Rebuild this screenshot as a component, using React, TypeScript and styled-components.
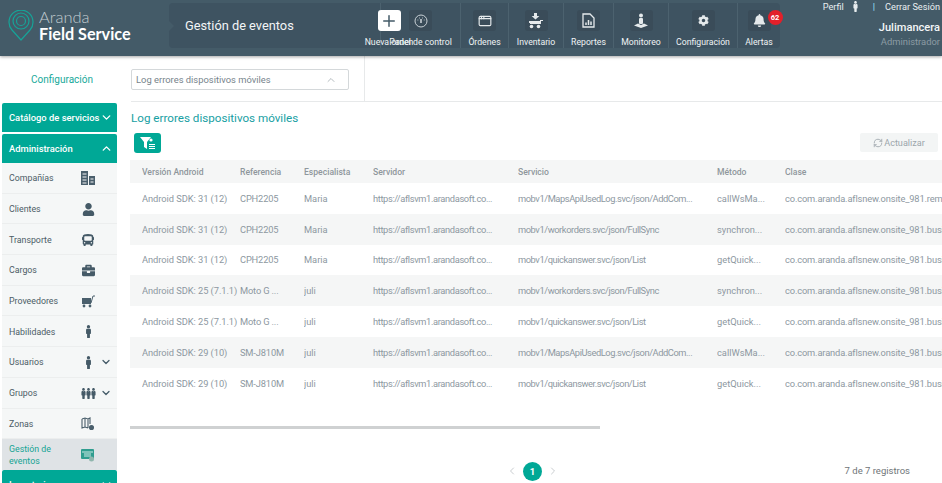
import React from "react";
import styled, { createGlobalStyle } from "styled-components";
import { FaUser, FaBus, FaBriefcase, FaMale, FaBell, FaCog } from "react-icons/fa";
import { Plus, AppWindow, RefreshCw, ChevronLeft, ChevronRight, ChevronDown, ChevronUp } from "lucide-react";

const Global = createGlobalStyle`
  html, body { margin: 0; padding: 0; background: #fff; overflow: hidden; }
  body { font-family: Roboto, "Noto Sans", sans-serif; width: 942px; height: 483px; }
  * { box-sizing: border-box; }
`;
const Page = styled.div`width: 942px; height: 483px; display: flex; flex-direction: column; overflow: hidden;`;
const Header = styled.header`
  height: 56px; flex: none; background: #445b68; display: flex; box-shadow: 0 1px 3px rgba(0,0,0,.35);
  position: relative; z-index: 2;
`;
const Logo = styled.div`width: 169px; flex: none; display: flex; align-items: flex-start; padding: 10px 0 0 8px; gap: 5px;`;
const LogoText = styled.div`display: flex; flex-direction: column; color: #fff; margin-top: -1px;`;
const LogoTop = styled.span`font-size: 16.5px; line-height: 16px; font-weight: 300; color: #c3ccd1; font-family: "Lato", sans-serif;`;
const LogoBottom = styled.span`font-size: 16.2px; line-height: 17px; font-weight: 700; white-space: nowrap; font-family: "Lato", sans-serif;`;
const TitleBar = styled.div`
  width: 611px; height: 45px; margin-top: 3px; flex: none; background: #3e5361; border-radius: 4px;
  display: flex; position: relative;
  &::before { content: ""; position: absolute; left: -1px; top: 17px; border: 6px solid transparent; border-left-color: #445b68; }
`;
const Title = styled.div`width: 195px; flex: none; padding: 14px 0 0 16px; color: #f2f5f6; font-size: 12.8px; line-height: 18px; white-space: nowrap;`;
const Nav = styled.nav`display: flex; flex: 1; margin-left: 16px;`;
const NavItem = styled.div<{ $w: number; $over?: boolean; $border?: boolean }>`
  width: ${p => p.$w}px; flex: none; display: flex; flex-direction: column; align-items: center; padding-top: 7px;
  border-left: ${p => (p.$border === false ? "none" : "1px solid #4c626f")};
  margin-right: ${p => (p.$over ? "-34px" : "0")}; margin-left: ${p => (p.$over ? "-16px" : "0")};
  position: relative; z-index: ${p => (p.$over ? 1 : 0)};
`;
const NavIcon = styled.div<{ $white?: boolean }>`
  width: 23px; height: 23px; border-radius: 3px; display: flex; align-items: center; justify-content: center; position: relative;
  background: ${p => (p.$white ? "#fff" : "#3a4c59")}; color: ${p => (p.$white ? "#445b68" : "#e5e9eb")};
`;
const NavLabel = styled.span`font-size: 8.7px; line-height: 12px; margin-top: 5px; color: #f0f4f5; white-space: nowrap;`;
const Badge = styled.span`
  position: absolute; top: 0; right: -12px; width: 15px; height: 15px; border-radius: 50%; background: #e3202a; color: #fff;
  font-size: 7.5px; font-weight: 700; display: flex; align-items: center; justify-content: center;
`;
const UserBox = styled.div`flex: 1; display: flex; flex-direction: column; align-items: flex-end; color: #e9eef0; padding-right: 2px;`;
const UserLinks = styled.div`display: flex; align-items: center; font-size: 9.2px; line-height: 13px; white-space: nowrap; gap: 6px;`;
const Pipe = styled.span`color: #8fdcf0; margin: 0 4px 0 6px; font-weight: 700;`;
const UserName = styled.div`font-size: 11.1px; font-weight: 500; line-height: 14px; margin-top: 8px; color: #f3f6f7;`;
const UserRole = styled.div`font-size: 9.4px; line-height: 14px; color: #8c9ba4;`;

const Body = styled.div`flex: 1; display: flex; min-height: 0;`;
const Sidebar = styled.aside`width: 130px; flex: none; display: flex; flex-direction: column; overflow: hidden;`;
const SideTitle = styled.div`height: 47px; flex: none; color: #17a99a; font-size: 10px; text-align: center; padding: 16px 6px 0 0; line-height: 16px;`;
const Group = styled.div<{ $mb?: number }>`
  width: 115px; height: 29px; flex: none; margin: 0 0 ${p => p.$mb ?? 0}px 2px; background: #00a896; color: #fff; border-radius: 2px 2px 0 0;
  display: flex; align-items: center; justify-content: space-between; padding: 0 4px 0 7px;
  font-size: 9.4px; font-weight: 500; white-space: nowrap;
  svg { flex: none; }
`;
const SideItem = styled.div<{ $active?: boolean }>`
  width: 115px; height: 30.7px; flex: none; margin-left: 2px; display: flex; align-items: center; padding: 1px 0 0 7px;
  background: ${p => (p.$active ? "#dfe3e6" : "#f5f7f7")}; border-bottom: 1px solid ${p => (p.$active ? "transparent" : "#eceeee")};
  color: ${p => (p.$active ? "#16a394" : "#4c5c66")}; font-size: 8.8px; line-height: 12px;
`;
const SideLabel = styled.span`flex: 1;`;
const SideIcon = styled.span<{ $caret?: boolean }>`
  width: 26px; margin-right: ${p => (p.$caret ? -3 : 16)}px; flex: none; display: flex; justify-content: center; color: #455a67;
`;
const SideCaret = styled.span`width: 16px; flex: none; display: flex; justify-content: center; margin-right: 3px; color: #445b68;`;
const Trio = styled.span`display: flex; flex-wrap: nowrap; svg { margin: 0 -3px; }`;

const Main = styled.main`flex: 1; min-width: 0; display: flex; flex-direction: column; overflow: hidden;`;
const SearchStrip = styled.div`height: 46px; flex: none; display: flex; margin-left: 1px; border-bottom: 1px solid #e7e9ea;`;
const SearchCell = styled.div`width: 234px; flex: none; padding-top: 13px; border-right: 1px solid #e7e9ea;`;
const Select = styled.div`
  width: 218px; height: 21px; border: 1px solid #d4d8da; border-radius: 2px; display: flex; align-items: center; justify-content: space-between;
  padding: 0 11px 0 4px; font-size: 9.4px; color: #76838b;
`;
const Content = styled.div`flex: 1; display: flex; flex-direction: column; min-height: 0;`;
const Heading = styled.h2`margin: 9px 0 0 1px; font-size: 11.65px; font-weight: 400; color: #17a0a3; line-height: 15px;`;
const ToolRow = styled.div`display: flex; justify-content: space-between; height: 30px; margin-top: 1px; padding-right: 4px; align-items: flex-start;`;
const FilterBtn = styled.button`
  width: 27px; height: 20px; margin: 6px 0 0 4px; border: none; padding: 0; background: #00a896; border-radius: 3px; display: flex; align-items: center; justify-content: center;
`;
const RefreshBtn = styled.button`
  width: 78px; height: 19px; margin-top: 6px; border: none; padding: 0; background: #f3f5f5; border-radius: 2px; color: #9ca5ab; font: inherit; font-size: 9.1px;
  display: flex; align-items: center; justify-content: center; gap: 1px;
`;
const TableWrap = styled.div`margin-top: 3px; height: 266px; flex: none; overflow: hidden;`;
const Table = styled.div`width: 900px; display: flex; flex-direction: column;`;
const Row = styled.div<{ $head?: boolean; $alt?: boolean }>`
  height: ${p => (p.$head ? "23px" : "30.8px")}; display: grid; grid-template-columns: 98px 64px 69px 145px 199px 68px 1fr; padding-left: 12px; align-items: center;
  background: ${p => (p.$head || p.$alt ? "#f5f6f6" : "#fff")}; color: ${p => (p.$head ? "#8f979c" : "#8d98a1")};
  font-size: ${p => (p.$head ? 8.6 : 9.3)}px; white-space: nowrap; font-weight: ${p => (p.$head ? 500 : 400)};
`;
const Cell = styled.span<{ $spacing?: number }>`overflow: hidden; white-space: nowrap; letter-spacing: ${p => p.$spacing ?? 0}px;`;
const Scrollbar = styled.div`width: 470px; height: 3px; background: #cfd1d2; flex: none;`;
const Footer = styled.div`flex: 1; display: flex; padding-top: 33px; justify-content: space-between;`;
const Pager = styled.div`margin-left: 376px; display: flex; align-items: center; gap: 5px; height: 18px; color: #c9cdd0;`;
const PageNum = styled.span`
  width: 19px; height: 19px; border-radius: 50%; background: #00a896; color: #fff; font-size: 9.5px; font-weight: 700; display: flex; align-items: center; justify-content: center;
`;
const Count = styled.span`font-size: 9.5px; color: #6f7578; margin: 2px 32px 0 0; line-height: 14px;`;

const LogoMark = () => (
  <svg width="26" height="31" viewBox="0 0 26 31" fill="none" stroke="#17a398" strokeWidth="1.2">
    <path d="M13 30 L4 20 A12 12 0 1 1 22 20 Z" strokeLinejoin="round" />
    <circle cx="13" cy="11" r="8" />
    <circle cx="13" cy="11" r="4.5" />
  </svg>
);
const Dial = () => (
  <svg width="14" height="14" viewBox="0 0 14 14" fill="none" stroke="#c9d1d6"><circle cx="7" cy="7" r="6" /><path d="M7 5v4" strokeWidth="1.6" /><path d="M3.5 6h.8M5 4h.8M8.2 4H9M9.8 6h.8" /></svg>
);
const Cart = () => (
  <svg width="16" height="16" viewBox="0 0 16 16" fill="#e5e9eb"><path d="M6 0h3v3h2.4L7.5 6.5 3.6 3H6z" /><rect x="1" y="8" width="11" height="2" /><path d="M12 10V7h3v1h-2v3H2v-1z" /><circle cx="3.5" cy="13.5" r="1.8" /><circle cx="10.5" cy="13.5" r="1.8" /></svg>
);
const Report = () => (
  <svg width="13" height="15" viewBox="0 0 13 15" fill="none" stroke="#e5e9eb" strokeWidth="1.3"><path d="M1 1h7l4 4v9H1z" /><path d="M4 12V9.5M6.5 12V7M9 12V8.5" strokeWidth="1.5" /></svg>
);
const Monitor = () => (
  <svg width="16" height="16" viewBox="0 0 16 16" fill="#e5e9eb"><circle cx="8" cy="2.5" r="2" /><rect x="6" y="5" width="4" height="6" rx="1" /><path d="M1 12.5l4-2 3 1.5 3-1.5 4 2-7 2.5z" /></svg>
);
const Building = () => (
  <svg width="14" height="14" viewBox="0 0 14 14" fill="#4a5f6c"><path d="M0 0h7v14H0z" /><path d="M8 5h6v9H8z" /><path d="M1.5 3h4M1.5 6h4M1.5 9h4M1.5 12h4M9.5 8h3M9.5 11h3" stroke="#f5f7f7" /></svg>
);
const Trolley = () => (
  <svg width="14" height="13" viewBox="0 0 14 13" fill="#4a5f6c"><path d="M1 3h9v6H1z" /><path d="M10 8l2-7h2" stroke="#4a5f6c" fill="none" /><circle cx="3" cy="11" r="1.4" /><circle cx="9" cy="11" r="1.4" /></svg>
);
const ZoneMap = () => (
  <svg width="14" height="14" viewBox="0 0 14 14" fill="none" stroke="#4a5f6c" strokeWidth="1.1"><path d="M1 2l3-1 3 1 2-1v6M1 2v9l3-1 3 1M4 1v9M7 2v9" /><circle cx="10.5" cy="10.5" r="2" fill="#4a5f6c" /></svg>
);
const Events = () => (
  <svg width="14" height="14" viewBox="0 0 14 14"><rect x="0" y="1" width="13" height="10" rx="1" fill="#2f9d8f" /><path d="M1 4h11M3 6h7M3 8h7" stroke="#cfe9e4" /><circle cx="10.5" cy="11" r="2.5" fill="#8fb6ad" /></svg>
);
const FilterIcon = () => (
  <svg width="16" height="13" viewBox="0 0 16 13" fill="#fff"><path d="M0 0h11L7 5v7L4 10V5z" /><circle cx="11" cy="3" r="1.6" /><path d="M9 7h6v1H9zM9 9h6v1H9zM9 11h6v1H9z" /></svg>
);

const head = ["Versión Android", "Referencia", "Especialista", "Servidor", "Servicio", "Método", "Clase"];
const columnSpacing = [-0.05, -0.15, 0, -0.36, -0.42, 0, -0.14];
const base1 = "co.com.aranda.aflsnew.onsite_981.remote.api";
const base2 = "co.com.aranda.aflsnew.onsite_981.business.api";
const rows = [
  ["Android SDK: 31 (12)", "CPH2205", "Maria", "https://aflsvm1.arandasoft.co...", "mobv1/MapsApiUsedLog.svc/json/AddCom...", "callWsMa...", base1],
  ["Android SDK: 31 (12)", "CPH2205", "Maria", "https://aflsvm1.arandasoft.co...", "mobv1/workorders.svc/json/FullSync", "synchron...", base2],
  ["Android SDK: 31 (12)", "CPH2205", "Maria", "https://aflsvm1.arandasoft.co...", "mobv1/quickanswer.svc/json/List", "getQuick...", base2],
  ["Android SDK: 25 (7.1.1)", "Moto G ...", "juli", "https://aflsvm1.arandasoft.co...", "mobv1/workorders.svc/json/FullSync", "synchron...", base2],
  ["Android SDK: 25 (7.1.1)", "Moto G ...", "juli", "https://aflsvm1.arandasoft.co...", "mobv1/quickanswer.svc/json/List", "getQuick...", base2],
  ["Android SDK: 29 (10)", "SM-J810M", "juli", "https://aflsvm1.arandasoft.co...", "mobv1/MapsApiUsedLog.svc/json/AddCom...", "callWsMa...", base2],
  ["Android SDK: 29 (10)", "SM-J810M", "juli", "https://aflsvm1.arandasoft.co...", "mobv1/quickanswer.svc/json/List", "getQuick...", base2],
];
const navItems: [string, number, React.ReactNode][] = [
  ["Órdenes", 48, <AppWindow size={14} />],
  ["Inventario", 55, <Cart />],
  ["Reportes", 50, <Report />],
  ["Monitoreo", 55, <Monitor />],
  ["Configuración", 69, <FaCog size={11} />],
];
const side: [string, React.ReactNode, boolean?][] = [
  ["Compañías", <Building />],
  ["Clientes", <FaUser size={13} />],
  ["Transporte", <FaBus size={12} />],
  ["Cargos", <FaBriefcase size={13} />],
  ["Proveedores", <Trolley />],
  ["Habilidades", <FaMale size={13} />],
  ["Usuarios", <FaMale size={13} />, true],
  ["Grupos", <Trio><FaMale size={11} /><FaMale size={11} /><FaMale size={11} /></Trio>, true],
  ["Zonas", <ZoneMap />],
];

export default function App() {
  return (
    <Page>
      <Global />
      <Header>
        <Logo>
          <LogoMark />
          <LogoText>
            <LogoTop>Aranda</LogoTop>
            <LogoBottom>Field Service</LogoBottom>
          </LogoText>
        </Logo>
        <TitleBar>
          <Title>Gestión de eventos</Title>
          <Nav>
            <NavItem $w={50} $over $border={false}>
              <NavIcon $white><Plus size={18} /></NavIcon>
              <NavLabel>Nueva orden</NavLabel>
            </NavItem>
            <NavItem $w={80}>
              <NavIcon><Dial /></NavIcon>
              <NavLabel>Panel de control</NavLabel>
            </NavItem>
            {navItems.map(([label, w, icon]) => (
              <NavItem key={label} $w={w}>
                <NavIcon>{icon}</NavIcon>
                <NavLabel>{label}</NavLabel>
              </NavItem>
            ))}
            <NavItem $w={43}>
              <NavIcon><FaBell size={13} /><Badge>62</Badge></NavIcon>
              <NavLabel>Alertas</NavLabel>
            </NavItem>
          </Nav>
        </TitleBar>
        <UserBox>
          <UserLinks>
            <span>Perfil</span>
            <FaMale size={11} />
            <Pipe>|</Pipe>
            <span>Cerrar Sesión</span>
          </UserLinks>
          <UserName>Julimancera</UserName>
          <UserRole>Administrador</UserRole>
        </UserBox>
      </Header>
      <Body>
        <Sidebar>
          <SideTitle>Configuración</SideTitle>
          <Group $mb={2}>Catálogo de servicios<ChevronDown size={13} strokeWidth={2.5} /></Group>
          <Group>Administración<ChevronUp size={13} strokeWidth={2.5} /></Group>
          {side.map(([label, icon, caret]) => (
            <SideItem key={label}>
              <SideLabel>{label}</SideLabel>
              <SideIcon $caret={caret}>{icon}</SideIcon>
              {caret && <SideCaret><ChevronDown size={12} strokeWidth={2.5} /></SideCaret>}
            </SideItem>
          ))}
          <SideItem $active>
            <SideLabel>Gestión de<br />eventos</SideLabel>
            <SideIcon><Events /></SideIcon>
          </SideItem>
          <Group>Inventario<ChevronDown size={13} strokeWidth={2.5} /></Group>
        </Sidebar>
        <Main>
          <SearchStrip>
            <SearchCell>
              <Select>Log errores dispositivos móviles<ChevronUp size={12} color="#b5bcc0" /></Select>
            </SearchCell>
          </SearchStrip>
          <Content>
            <Heading>Log errores dispositivos móviles</Heading>
            <ToolRow>
              <FilterBtn aria-label="Filtro"><FilterIcon /></FilterBtn>
              <RefreshBtn><RefreshCw size={10} />Actualizar</RefreshBtn>
            </ToolRow>
            <TableWrap>
              <Table>
                <Row $head>{head.map(h => <Cell key={h}>{h}</Cell>)}</Row>
                {rows.map((r, i) => (
                  <Row key={i} $alt={i % 2 === 1}>
                    {r.map((c, j) => <Cell key={j} $spacing={columnSpacing[j]}>{c}</Cell>)}
                  </Row>
                ))}
              </Table>
            </TableWrap>
            <Scrollbar />
            <Footer>
              <Pager>
                <ChevronLeft size={12} />
                <PageNum>1</PageNum>
                <ChevronRight size={12} />
              </Pager>
              <Count>7 de 7 registros</Count>
            </Footer>
          </Content>
        </Main>
      </Body>
    </Page>
  );
}
